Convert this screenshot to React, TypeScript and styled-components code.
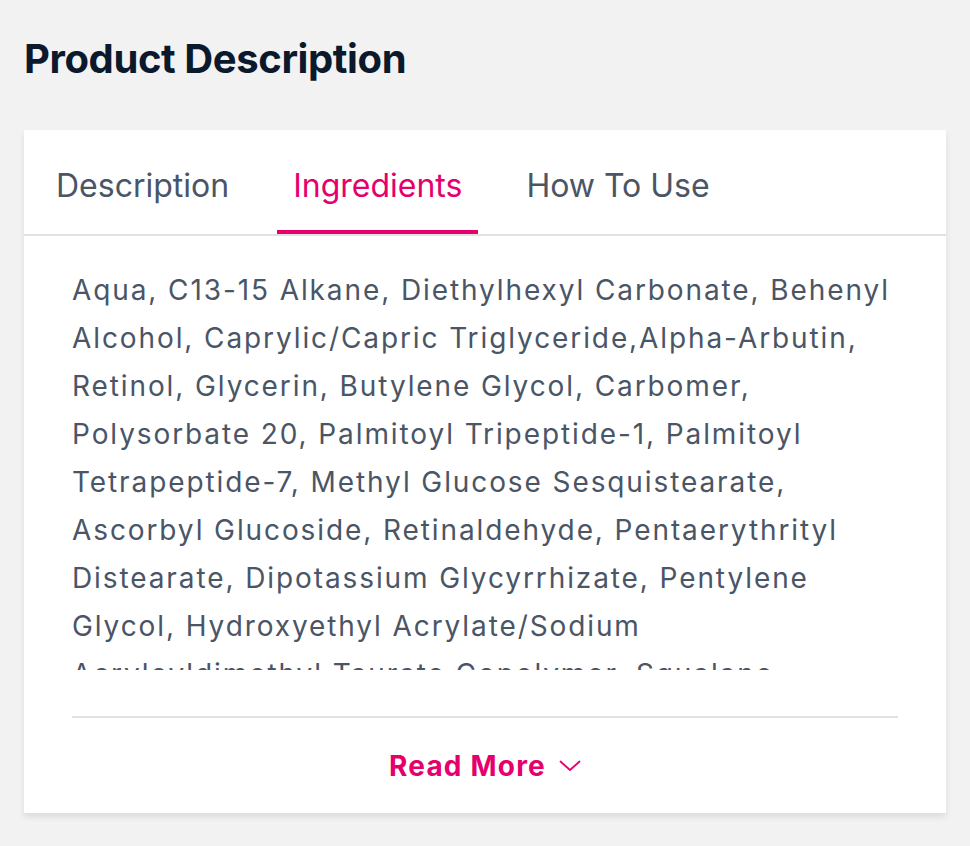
import React, { useState } from "react";
import styled, { createGlobalStyle } from "styled-components";

const GlobalStyle = createGlobalStyle`
  body {
    margin: 0;
    background: #f2f2f2;
    font-family: Inter, "Noto Sans", sans-serif;
  }
`;

const SPage = styled.div`
  padding: 34px 24px 32px;
`;

const STitle = styled.h2`
  margin: 0 0 46px;
  font-size: 40px;
  line-height: 50px;
  font-weight: 700;
  letter-spacing: -0.4px;
  color: #0b192c;
`;

const SCard = styled.div`
  background: #ffffff;
  box-shadow: 0 4px 6px rgba(0, 0, 0, 0.09);
`;

const STabList = styled.div`
  display: flex;
  gap: 32px;
  padding: 0 16px;
  border-bottom: 2px solid #e2e2e2;
`;

const STab = styled.div<{ $active?: boolean }>`
  padding: 36px 16px 28px;
  font-size: 32px;
  line-height: 40px;
  font-weight: 400;
  color: ${({ $active }) => ($active ? "#e5006e" : "#4a5566")};
  box-shadow: ${({ $active }) => ($active ? "inset 0 -4px 0 #e5006e" : "none")};
  cursor: pointer;
  user-select: none;
`;

const SBody = styled.div`
  padding: 30px 48px 0;
`;

const SText = styled.p<{ $open: boolean }>`
  margin: 0;
  font-size: 28px;
  line-height: 48px;
  letter-spacing: 1.9px;
  color: #4a5566;
  max-height: ${({ $open }) => ($open ? "none" : "404px")};
  overflow: hidden;
`;

const SDivider = styled.div`
  margin-top: 46px;
  height: 2px;
  background: #e2e2e2;
`;

const SFooter = styled.div`
  display: flex;
  justify-content: center;
  align-items: center;
  height: 95px;
`;

const SReadMore = styled.button`
  display: flex;
  align-items: center;
  gap: 13px;
  border: none;
  background: transparent;
  padding: 0;
  font-family: inherit;
  font-size: 28px;
  font-weight: 700;
  letter-spacing: 1.2px;
  color: #e5006e;
  cursor: pointer;
`;

const tabs = ["Description", "Ingredients", "How To Use"];

const ingredients =
  "Aqua, C13-15 Alkane, Diethylhexyl Carbonate, Behenyl Alcohol, Caprylic/Capric Triglyceride,Alpha-Arbutin, Retinol, Glycerin, Butylene Glycol, Carbomer, Polysorbate 20, Palmitoyl Tripeptide-1, Palmitoyl Tetrapeptide-7, Methyl Glucose Sesquistearate, Ascorbyl Glucoside, Retinaldehyde, Pentaerythrityl Distearate, Dipotassium Glycyrrhizate, Pentylene Glycol, Hydroxyethyl Acrylate/Sodium Acryloyldimethyl Taurate Copolymer, Squalane, Tocopherol, Sodium Hydroxide, Disodium EDTA, Phenoxyethanol, Ethylhexylglycerin.";

const App: React.FC = () => {
  const [active, setActive] = useState(1);
  const [open, setOpen] = useState(false);

  return (
    <SPage>
      <GlobalStyle />
      <STitle>Product Description</STitle>
      <SCard>
        <STabList>
          {tabs.map((t, i) => (
            <STab key={t} $active={i === active} onClick={() => setActive(i)}>
              {t}
            </STab>
          ))}
        </STabList>
        <SBody>
          <SText $open={open}>{ingredients}</SText>
          <SDivider />
          <SFooter>
            <SReadMore onClick={() => setOpen(!open)}>
              {open ? "Read Less" : "Read More"}
              <svg width="22" height="12" viewBox="0 0 22 12" fill="none">
                <polyline
                  points="1.5,1.5 11,10 20.5,1.5"
                  stroke="#e5006e"
                  strokeWidth="1.8"
                  strokeLinecap="round"
                  strokeLinejoin="round"
                />
              </svg>
            </SReadMore>
          </SFooter>
        </SBody>
      </SCard>
    </SPage>
  );
};

export default App;
